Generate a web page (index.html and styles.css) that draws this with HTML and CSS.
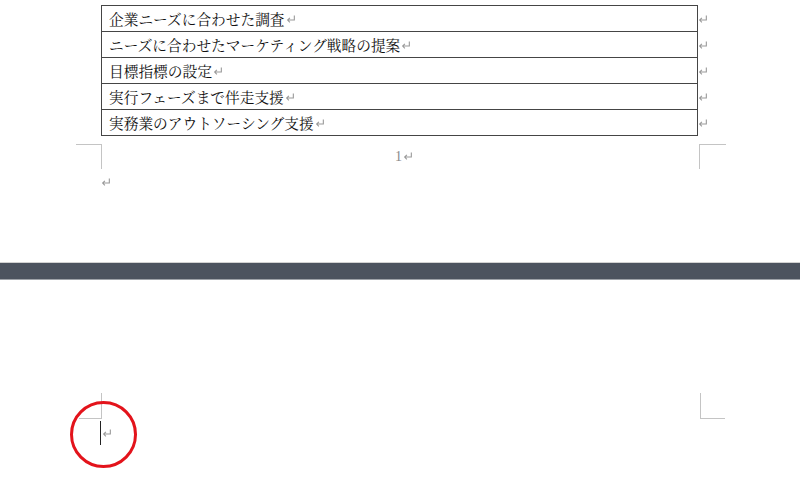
FILE: index.html
```html
<!DOCTYPE html>
<html lang="ja">
<head>
<meta charset="utf-8">
<link rel="stylesheet" href="styles.css">
</head>
<body>
<div class="page page-one">
  <div class="table">
    <div class="row"><div class="cell">企業ニーズに合わせた調査<svg class="ret" viewBox="0 0 9 8"><path d="M7.5 0.5V4.5H1.5M3.5 2.5L1.5 4.5L3.5 6.5"/></svg></div><svg class="ret" viewBox="0 0 9 8"><path d="M7.5 0.5V4.5H1.5M3.5 2.5L1.5 4.5L3.5 6.5"/></svg></div>
    <div class="row"><div class="cell">ニーズに合わせたマーケティング戦略の提案<svg class="ret" viewBox="0 0 9 8"><path d="M7.5 0.5V4.5H1.5M3.5 2.5L1.5 4.5L3.5 6.5"/></svg></div><svg class="ret" viewBox="0 0 9 8"><path d="M7.5 0.5V4.5H1.5M3.5 2.5L1.5 4.5L3.5 6.5"/></svg></div>
    <div class="row"><div class="cell">目標指標の設定<svg class="ret" viewBox="0 0 9 8"><path d="M7.5 0.5V4.5H1.5M3.5 2.5L1.5 4.5L3.5 6.5"/></svg></div><svg class="ret" viewBox="0 0 9 8"><path d="M7.5 0.5V4.5H1.5M3.5 2.5L1.5 4.5L3.5 6.5"/></svg></div>
    <div class="row"><div class="cell">実行フェーズまで伴走支援<svg class="ret" viewBox="0 0 9 8"><path d="M7.5 0.5V4.5H1.5M3.5 2.5L1.5 4.5L3.5 6.5"/></svg></div><svg class="ret" viewBox="0 0 9 8"><path d="M7.5 0.5V4.5H1.5M3.5 2.5L1.5 4.5L3.5 6.5"/></svg></div>
    <div class="row"><div class="cell">実務業のアウトソーシング支援<svg class="ret" viewBox="0 0 9 8"><path d="M7.5 0.5V4.5H1.5M3.5 2.5L1.5 4.5L3.5 6.5"/></svg></div><svg class="ret" viewBox="0 0 9 8"><path d="M7.5 0.5V4.5H1.5M3.5 2.5L1.5 4.5L3.5 6.5"/></svg></div>
  </div>
  <div class="footer">
    <div class="mark mark-tl"></div>
    <div class="page-num"><span class="num">1</span><svg class="ret" viewBox="0 0 9 8"><path d="M7.5 0.5V4.5H1.5M3.5 2.5L1.5 4.5L3.5 6.5"/></svg></div>
    <div class="mark mark-tr"></div>
  </div>
  <div class="para-end"><svg class="ret" viewBox="0 0 9 8"><path d="M7.5 0.5V4.5H1.5M3.5 2.5L1.5 4.5L3.5 6.5"/></svg></div>
</div>
<div class="gap-bar"></div>
<div class="page page-two">
  <div class="header">
    <div class="mark mark-bl"></div>
    <div class="header-space"></div>
    <div class="mark mark-br"></div>
  </div>
  <div class="first-line">
    <span class="caret"></span><svg class="ret" viewBox="0 0 9 8"><path d="M7.5 0.5V4.5H1.5M3.5 2.5L1.5 4.5L3.5 6.5"/></svg>
    <div class="circle"></div>
  </div>
</div>
</body>
</html>
```

FILE: styles.css
```css
html, body {
  margin: 0;
  padding: 0;
  background: #ffffff;
}
body {
  width: 800px;
  height: 480px;
  overflow: hidden;
  font-family: "Noto Serif CJK JP", "Noto Sans CJK JP", serif;
  color: #111;
}
.ret {
  width: 10px;
  height: 9px;
  flex: none;
}
.ret path {
  fill: none;
  stroke: #9a9a9a;
  stroke-width: 1;
}
.page-one {
  height: 262px;
  display: flex;
  flex-direction: column;
}
.table {
  margin-top: 5px;
  margin-left: 101px;
  display: flex;
  flex-direction: column;
}
.row {
  display: flex;
  align-items: center;
  margin-top: -1px;
}
.row:first-child {
  margin-top: 0;
}
.cell {
  width: 581px;
  height: 25px;
  border: 1px solid #454545;
  padding: 0 7px;
  display: flex;
  align-items: center;
  font-size: 14.7px;
  line-height: 25px;
  white-space: nowrap;
}
.cell .ret {
  margin-left: 1px;
  margin-top: 1px;
}
.row > .ret {
  margin-left: 0;
  margin-top: 1px;
}
.footer {
  display: flex;
  margin-top: 8px;
  margin-left: 76px;
  height: 25px;
}
.mark {
  flex: none;
  box-sizing: border-box;
  border-color: #c4c4c4;
  border-style: solid;
  border-width: 0;
}
.mark-tl {
  width: 26px;
  height: 25px;
  border-top-width: 1px;
  border-right-width: 1px;
}
.mark-tr {
  width: 27px;
  height: 25px;
  border-top-width: 1px;
  border-left-width: 1px;
}
.page-num {
  width: 597px;
  display: flex;
  align-items: center;
  justify-content: center;
  padding-left: 7px;
  box-sizing: border-box;
}
.page-num .num {
  font-family: "Liberation Serif", serif;
  font-size: 14px;
  color: #8a8a8a;
  line-height: 14px;
  margin-right: 1px;
}
.para-end {
  margin-left: 101px;
  margin-top: 9px;
  display: flex;
}
.gap-bar {
  height: 16px;
  background: #4c535f;
  border-top: 1px solid #d2d2d2;
  border-bottom: 1px solid #9ea2a9;
}
.page-two {
  padding-top: 113px;
}
.header {
  display: flex;
  margin-left: 79px;
  height: 26px;
}
.mark-bl {
  width: 23px;
  height: 26px;
  border-bottom-width: 1px;
  border-right-width: 1px;
}
.header-space {
  width: 598px;
}
.mark-br {
  width: 25px;
  height: 26px;
  border-bottom-width: 1px;
  border-left-width: 1px;
}
.first-line {
  position: relative;
  margin-left: 100px;
  margin-top: 1px;
  height: 25px;
  display: flex;
  align-items: center;
}
.caret {
  width: 1px;
  height: 24px;
  background: #222;
  margin-right: 1px;
}
.first-line .ret {
  margin-top: 2px;
}
.circle {
  position: absolute;
  left: -30px;
  top: -19px;
  width: 61px;
  height: 61px;
  border: 3.5px solid #e3131b;
  border-radius: 50%;
}
```
